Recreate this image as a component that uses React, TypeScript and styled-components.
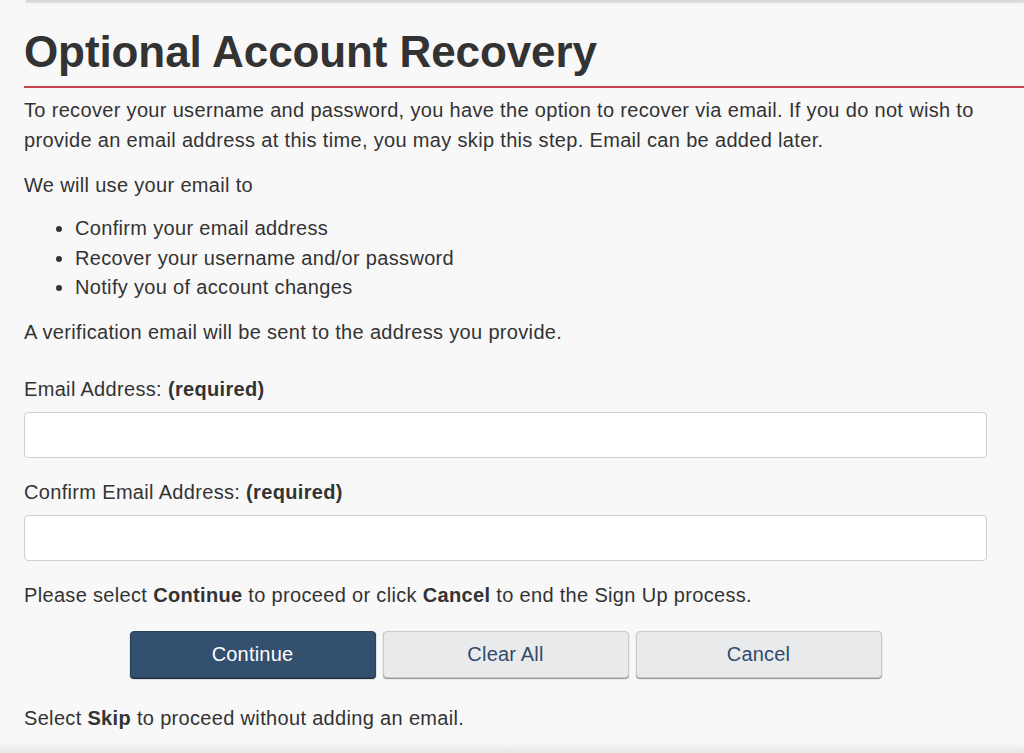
import React from "react";
import styled, { createGlobalStyle } from "styled-components";

const Global = createGlobalStyle`
  html, body { margin: 0; padding: 0; background: #f8f8f8; }
  body { font-family: "Liberation Sans", Arial, sans-serif; color: #333; }
  * { box-sizing: border-box; }
`;

const Page = styled.div`
  height: 753px;
  overflow: hidden;
  display: flex;
  flex-direction: column;
`;

const TopEdge = styled.div`
  height: 2px;
  margin-left: 26px;
  background: #d9d9d9;
  box-shadow: 0 1px 2px rgba(0, 0, 0, 0.12);
`;

const Main = styled.main`
  flex: 1;
  padding-left: 24px;
`;

const Title = styled.h1`
  margin: 26px 0 0;
  padding-bottom: 10px;
  font-size: 44px;
  line-height: 48px;
  font-weight: 700;
  color: #333;
  letter-spacing: -0.1px;
  border-bottom: 2px solid #c9434f;
`;

const Content = styled.div`
  padding-right: 37px;
  font-size: 20px;
  letter-spacing: 0.33px;
`;

const Para = styled.p<{ $top?: number }>`
  margin: ${(p) => p.$top ?? 0}px 0 0;
  line-height: 30px;
`;

const List = styled.ul`
  margin: 14px 0 0;
  padding-left: 51px;
  line-height: 29.5px;
`;

const Field = styled.div<{ $top: number }>`
  margin-top: ${(p) => p.$top}px;
  display: flex;
  flex-direction: column;
  gap: 11px;
`;

const Label = styled.label`
  line-height: 24px;
`;

const Input = styled.input`
  height: 46px;
  width: 100%;
  border: 1px solid #cfcfcf;
  border-radius: 4px;
  background: #fff;
  font-size: 18px;
  padding: 0 12px;
`;

const Buttons = styled.div`
  margin-top: 21px;
  display: flex;
  justify-content: center;
  gap: 7px;
`;

const Button = styled.button<{ $primary?: boolean }>`
  width: 246px;
  height: 47px;
  border-radius: 4px;
  font-family: "Liberation Sans", Arial, sans-serif;
  font-size: 20px;
  letter-spacing: 0.2px;
  cursor: pointer;
  background: ${(p) => (p.$primary ? "#33506f" : "#e9eaec")};
  color: ${(p) => (p.$primary ? "#fff" : "#2f4b6c")};
  border: 1px solid ${(p) => (p.$primary ? "#2a4360" : "#c9c9cb")};
  box-shadow: ${(p) =>
    p.$primary ? "0 1px 1px #10161e" : "0 1px 1px #8d8d8f"};
`;

const Bottom = styled.div`
  height: 9px;
  background: linear-gradient(#f6f6f6, #e6e6e6);
`;

export default function App() {
  return (
    <Page>
      <Global />
      <TopEdge />
      <Main>
        <Title>Optional Account Recovery</Title>
        <Content>
          <Para $top={7}>
            To recover your username and password, you have the option to recover via email. If you do not wish to
            provide an email address at this time, you may skip this step. Email can be added later.
          </Para>
          <Para $top={15}>We will use your email to</Para>
          <List>
            <li>Confirm your email address</li>
            <li>Recover your username and/or password</li>
            <li>Notify you of account changes</li>
          </List>
          <Para $top={14}>A verification email will be sent to the address you provide.</Para>
          <Field $top={30}>
            <Label>
              Email Address: <b>(required)</b>
            </Label>
            <Input type="email" />
          </Field>
          <Field $top={22}>
            <Label>
              Confirm Email Address: <b>(required)</b>
            </Label>
            <Input type="email" />
          </Field>
          <Para $top={19}>
            Please select <b>Continue</b> to proceed or click <b>Cancel</b> to end the Sign Up process.
          </Para>
          <Buttons>
            <Button $primary>Continue</Button>
            <Button>Clear All</Button>
            <Button>Cancel</Button>
          </Buttons>
          <Para $top={25}>
            Select <b>Skip</b> to proceed without adding an email.
          </Para>
        </Content>
      </Main>
      <Bottom />
    </Page>
  );
}
